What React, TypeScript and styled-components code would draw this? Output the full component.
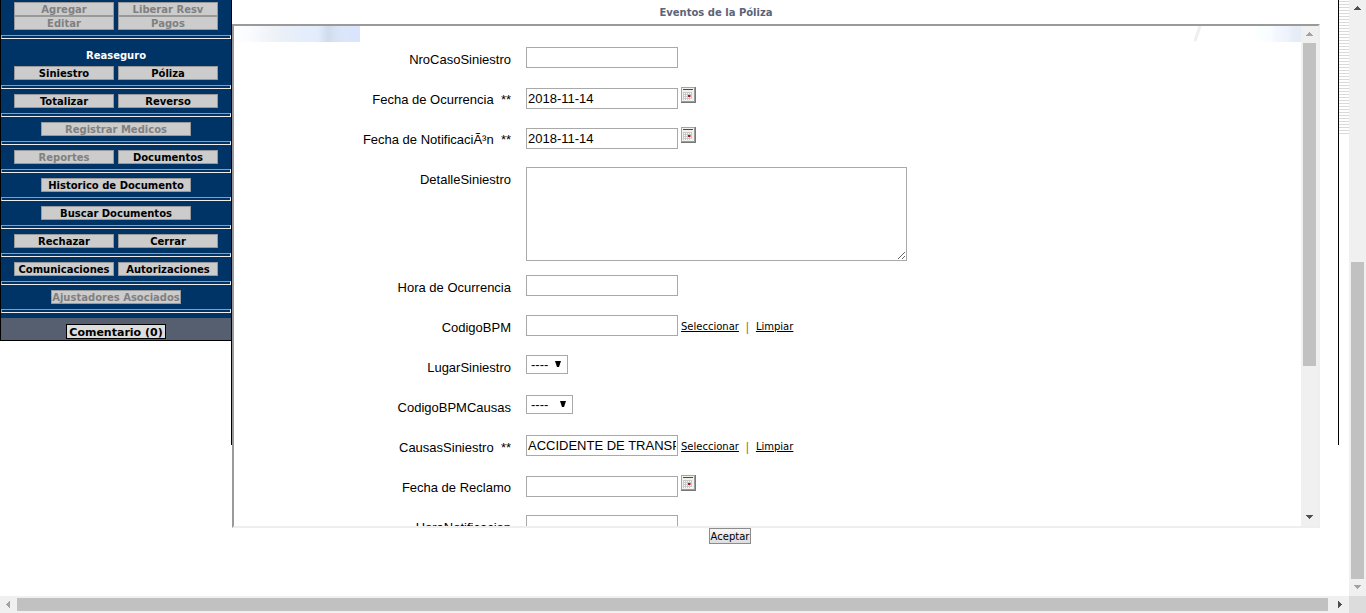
import React from "react";
import styled, { createGlobalStyle } from "styled-components";

const GlobalStyle = createGlobalStyle`
  *, *::before, *::after { box-sizing: border-box; }
  body { margin: 0; background: #fff; color: #000; }
  body, button, input, select, textarea { font-family: "Liberation Sans", Arial, sans-serif; font-size: 13px; }
`;

const verdana = `"DejaVu Sans", Verdana, sans-serif`;

const Window = styled.div`
  display: grid;
  grid-template-columns: 1fr 17px;
  grid-template-rows: 1fr 17px;
  height: 100vh;
  overflow: hidden;
`;

const Page = styled.div`
  display: grid;
  grid-template-columns: 232px 1fr 11px;
  align-items: start;
  min-width: 0;
  min-height: 0;
  overflow: hidden;
`;

/* Sidebar */

const SideColumn = styled.aside`
  height: 445px;
  border-right: 1px solid #000;
`;

const Menu = styled.nav`
  border-left: 1px solid #000;
  border-bottom: 1px solid #000;
  background: #003366;
  padding-top: 2px;
`;

const MenuGroup = styled.div<{ $first?: boolean }>`
  padding: ${(p) => (p.$first ? "0 0 5px" : "5px 0")};
`;

const MenuRow = styled.div`
  display: flex;
  justify-content: center;
  gap: 4px;
`;

const MenuHeading = styled.h2`
  margin: 0;
  padding: 6px 0 4px;
  font: bold 10px/12px ${verdana};
  color: #fff;
  text-align: center;
`;

const MenuButton = styled.button<{ $width?: number }>`
  width: ${(p) => p.$width ?? 100}px;
  height: 14px;
  padding: 1px 0 0;
  border: 1px solid #999;
  background: #ccc;
  color: #000;
  font: bold 10px/12px ${verdana};
  white-space: nowrap;
  &:disabled { color: #808080; }
`;

const Rule = styled.hr`
  height: 4px;
  margin: 0;
  border: 1px solid;
  border-color: #9a9a9a #eee #eee #9a9a9a;
`;

const CommentBar = styled.div`
  display: flex;
  justify-content: center;
  margin-top: 5px;
  padding: 6px 0 1px;
  background: #565f70;
`;

const CommentButton = styled.button`
  width: 100px;
  height: 15px;
  padding: 1px 0 0;
  border: 1px solid #000;
  background: #ddd;
  font: bold 11px/13px ${verdana};
  white-space: nowrap;
`;

/* Main column */

const Main = styled.main`
  min-width: 0;
`;

const Title = styled.h1`
  margin: 0;
  padding: 7px 138px 5px 0;
  font: bold 10px/12px ${verdana};
  color: #5a6478;
  text-align: center;
`;

const Frame = styled.section`
  display: grid;
  grid-template-columns: 1fr 17px;
  height: 504px;
  margin-right: 18px;
  border: 2px solid;
  border-color: #9a9a9a #eee #eee #9a9a9a;
  overflow: hidden;
`;

const FrameBody = styled.div`
  min-width: 0;
  height: 500px;
  overflow: hidden;
`;

const Banner = styled.div`
  display: flex;
  height: 16px;
`;

const BannerLeft = styled.div`
  width: 126px;
  background: linear-gradient(90deg, #fbfeff 0, #fafbfe 16px, #f1f4f8 34px, #ebf0f7 48px, #e5eefb 66px, #e2edfc 84px, #d0dceb 94px, #d8e4f5 102px, #dae6fc 112px, #dae4fe 126px);
`;

const BannerRight = styled.div`
  width: 44px;
  background: linear-gradient(90deg, #fbffff 0, #f8fdff 14px, #f3f6fd 20px, #eff3fc 30px, #e6edf6 36px, #e4ecf5 44px);
`;

const Streak = styled.svg`
  margin-left: auto;
  margin-right: 55px;
`;

const Form = styled.form`
  padding-top: 5px;
`;

const FormRow = styled.div<{ $tall?: boolean }>`
  display: grid;
  grid-template-columns: 277px 1fr;
  column-gap: 15px;
  align-items: start;
  height: ${(p) => (p.$tall ? 108 : 40)}px;
`;

const Label = styled.label`
  padding-top: 5px;
  line-height: 16px;
  text-align: right;
  white-space: pre;
`;

const Controls = styled.div`
  display: flex;
  align-items: flex-start;
  gap: 3px;
`;

const TextInput = styled.input<{ $lowered?: boolean }>`
  width: 152px;
  height: 21px;
  margin: ${(p) => (p.$lowered ? 1 : 0)}px 0 0;
  padding: 1px;
  border: 1px solid #a9a9a9;
  border-radius: 0;
  outline: 0;
`;

const TextArea = styled.textarea`
  width: 381px;
  height: 94px;
  padding: 2px;
  border: 1px solid #a9a9a9;
`;

const SelectBox = styled.span`
  position: relative;
  display: inline-flex;
`;

const Select = styled.select<{ $width: number }>`
  width: ${(p) => p.$width}px;
  height: 19px;
  padding: 0 4px;
  border: 1px solid #a9a9a9;
  border-radius: 0;
  background: #fff;
  color: #000;
  appearance: none;
`;

const SelectArrow = styled.svg`
  position: absolute;
  top: 6px;
  right: 7px;
  pointer-events: none;
`;

const CalendarButton = styled.button`
  display: block;
  width: 15px;
  height: 16px;
  padding: 0;
  border: 0;
  background: none;
  svg { display: block; }
`;

const Links = styled.span`
  display: flex;
  align-items: center;
  padding-top: 4px;
  font: 10px/16px ${verdana};
`;

const TextLink = styled.a`
  color: #000;
  text-decoration: underline;
`;

const Divider = styled.span`
  width: 17px;
  font: 13px/16px "Liberation Sans", Arial, sans-serif;
  color: #b5791c;
  text-align: center;
`;

const Actions = styled.div`
  display: flex;
  justify-content: center;
  padding-right: 110px;
`;

const SubmitButton = styled.button`
  width: 42px;
  height: 16px;
  padding: 1px 0 0;
  border: 1px solid #8c8c8c;
  border-radius: 0;
  background: linear-gradient(#f6f6f6, #dedede);
  color: #000;
  font: 10px/14px ${verdana};
`;

const Gutter = styled.div`
  height: 445px;
  border-left: 1px solid #000;
`;

const Stripes = styled.div`
  height: 134px;
  background: repeating-linear-gradient(#fff 0 1px, #d9d9d9 1px 2px, #fff 2px 3px);
`;

/* Scroll bars */

const Bar = styled.div<{ $horizontal?: boolean }>`
  display: flex;
  flex-direction: ${(p) => (p.$horizontal ? "row" : "column")};
  min-width: 0;
  min-height: 0;
  background: #f0f0f0;
`;

const BarButton = styled.button`
  display: flex;
  align-items: center;
  justify-content: center;
  flex: none;
  width: 17px;
  height: 17px;
  padding: 0 1px 1px 0;
  border: 0;
  background: none;
`;

const Space = styled.div<{ $grow: number }>`
  flex: ${(p) => p.$grow} 1 0;
`;

const Thumb = styled.div<{ $grow: number; $horizontal?: boolean }>`
  flex: ${(p) => p.$grow} 1 0;
  margin: ${(p) => (p.$horizontal ? "2px 0" : "0 2px")};
  background: #c1c1c1;
`;

const Corner = styled.div`
  background: #dcdcdc;
`;

const arrows = {
  up: "M3 0h1v1h1v1h1v1h1v1H0V3h1V2h1V1h1z",
  down: "M0 0h7v1H6v1H5v1H4v1H3V3H2V2H1V1H0z",
  left: "M4 0v7H3V6H2V5H1V4H0V3h1V2h1V1h1V0z",
  right: "M0 0h1v1h1v1h1v1h1v1H3v1H2v1H1v1H0z",
};

function Arrow({ dir, dim }: { dir: keyof typeof arrows; dim?: boolean }) {
  const sideways = dir === "left" || dir === "right";
  return (
    <BarButton type="button" aria-label={dir} tabIndex={-1}>
      <svg width={sideways ? 4 : 7} height={sideways ? 7 : 4} shapeRendering="crispEdges">
        <path d={arrows[dir]} fill={dim ? "#a3a3a3" : "#505050"} />
      </svg>
    </BarButton>
  );
}

function CalendarIcon() {
  return (
    <CalendarButton type="button" aria-label="Calendario">
      <svg width="15" height="16" shapeRendering="crispEdges">
        <path d="M0 0h15v16H0z" fill="#77787a" />
        <path d="M0 0h14v1H0zM0 0h1v15H0z" fill="#a8a39d" />
        <path d="M1 1h12v13H1z" fill="#f4f1ec" />
        <path d="M13 1h1v14H1v-1h12z" fill="#9b9b9b" />
        <path d="M2 2h10v1H2z" fill="#474b50" />
        <path d="M2 5h9v8H2z" fill="#c8c8c8" />
        <path d="M3 6h1v1H3zM5 6h1v1H5zM7 6h1v1H7zM9 6h1v1H9zM3 8h1v1H3zM5 8h1v1H5zM3 10h1v1H3zM5 10h1v1H5zM7 10h1v1H7zM9 10h1v1H9zM3 12h1v1H3zM5 12h1v1H5zM7 12h1v1H7zM9 12h2v1H9z" fill="#fff" />
        <path d="M7 8h2v2H7z" fill="#a8101c" />
        <path d="M9 8h1v2H9z" fill="#cf8085" />
      </svg>
    </CalendarButton>
  );
}

type Item = { text: string; off?: boolean; width?: number };

const groups: { heading?: string; rows: Item[][] }[] = [
  { rows: [[{ text: "Agregar", off: true }, { text: "Liberar Resv", off: true }], [{ text: "Editar", off: true }, { text: "Pagos", off: true }]] },
  { heading: "Reaseguro", rows: [[{ text: "Siniestro" }, { text: "Póliza" }]] },
  { rows: [[{ text: "Totalizar" }, { text: "Reverso" }]] },
  { rows: [[{ text: "Registrar Medicos", off: true, width: 150 }]] },
  { rows: [[{ text: "Reportes", off: true }, { text: "Documentos" }]] },
  { rows: [[{ text: "Historico de Documento", width: 150 }]] },
  { rows: [[{ text: "Buscar Documentos", width: 150 }]] },
  { rows: [[{ text: "Rechazar" }, { text: "Cerrar" }]] },
  { rows: [[{ text: "Comunicaciones" }, { text: "Autorizaciones" }]] },
  { rows: [[{ text: "Ajustadores Asociados", off: true, width: 130 }]] },
];

type Field = {
  id: string;
  label: string;
  kind: "text" | "date" | "area" | "lookup" | "select";
  value?: string;
  width?: number;
};

const fields: Field[] = [
  { id: "caso", label: "NroCasoSiniestro", kind: "text" },
  { id: "ocurrencia", label: "Fecha de Ocurrencia\u00a0 **", kind: "date", value: "2018-11-14" },
  { id: "notificacion", label: "Fecha de NotificaciÃ³n\u00a0 **", kind: "date", value: "2018-11-14" },
  { id: "detalle", label: "DetalleSiniestro", kind: "area" },
  { id: "hora", label: "Hora de Ocurrencia", kind: "text" },
  { id: "bpm", label: "CodigoBPM", kind: "lookup" },
  { id: "lugar", label: "LugarSiniestro", kind: "select", width: 42 },
  { id: "bpmCausas", label: "CodigoBPMCausas", kind: "select", width: 47 },
  { id: "causas", label: "CausasSiniestro\u00a0 **", kind: "lookup", value: "ACCIDENTE DE TRANSPORTE" },
  { id: "reclamo", label: "Fecha de Reclamo", kind: "date" },
  { id: "horaNotificacion", label: "HoraNotificacion", kind: "text" },
];

function FieldControl({ field }: { field: Field }) {
  if (field.kind === "area") return <TextArea id={field.id} />;
  if (field.kind === "select") {
    return (
      <SelectBox>
        <Select id={field.id} $width={field.width ?? 42}>
          <option>----</option>
        </Select>
        <SelectArrow width="6" height="6">
          <path d="M0 0h6L4 6H2z" fill="#000" />
        </SelectArrow>
      </SelectBox>
    );
  }
  return (
    <>
      <TextInput id={field.id} type="text" defaultValue={field.value} $lowered={field.kind === "date"} />
      {field.kind === "date" && <CalendarIcon />}
      {field.kind === "lookup" && (
        <Links>
          <TextLink href="#">Seleccionar</TextLink>
          <Divider>|</Divider>
          <TextLink href="#">Limpiar</TextLink>
        </Links>
      )}
    </>
  );
}

export default function App() {
  return (
    <>
      <GlobalStyle />
      <Window>
        <Page>
          <SideColumn>
            <Menu>
              {groups.map((group, i) => (
                <React.Fragment key={i}>
                  <MenuGroup $first={i === 0}>
                    {group.heading && <MenuHeading>{group.heading}</MenuHeading>}
                    {group.rows.map((row, j) => (
                      <MenuRow key={j}>
                        {row.map((item) => (
                          <MenuButton key={item.text} type="button" disabled={item.off} $width={item.width}>
                            {item.text}
                          </MenuButton>
                        ))}
                      </MenuRow>
                    ))}
                  </MenuGroup>
                  <Rule />
                </React.Fragment>
              ))}
              <CommentBar>
                <CommentButton type="button">Comentario (0)</CommentButton>
              </CommentBar>
            </Menu>
          </SideColumn>
          <Main>
            <Title>Eventos de la Póliza</Title>
            <Frame>
              <FrameBody>
                <Banner>
                  <BannerLeft />
                  <Streak width="8" height="16">
                    <path d="M6 0L1 15" stroke="#efefef" strokeWidth="3" fill="none" />
                  </Streak>
                  <BannerRight />
                </Banner>
                <Form id="evento" onSubmit={(e) => e.preventDefault()}>
                  {fields.map((field) => (
                    <FormRow key={field.id} $tall={field.kind === "area"}>
                      <Label htmlFor={field.id}>{field.label}</Label>
                      <Controls>
                        <FieldControl field={field} />
                      </Controls>
                    </FormRow>
                  ))}
                </Form>
              </FrameBody>
              <Bar>
                <Arrow dir="up" dim />
                <Thumb $grow={323} />
                <Space $grow={143} />
                <Arrow dir="down" />
              </Bar>
            </Frame>
            <Actions>
              <SubmitButton type="submit" form="evento">Aceptar</SubmitButton>
            </Actions>
          </Main>
          <Gutter>
            <Stripes />
          </Gutter>
        </Page>
        <Bar>
          <Arrow dir="up" />
          <Space $grow={245} />
          <Thumb $grow={317} />
          <Arrow dir="down" dim />
        </Bar>
        <Bar $horizontal>
          <Arrow dir="left" dim />
          <Thumb $grow={1311} $horizontal />
          <Space $grow={4} />
          <Arrow dir="right" />
        </Bar>
        <Corner />
      </Window>
    </>
  );
}
